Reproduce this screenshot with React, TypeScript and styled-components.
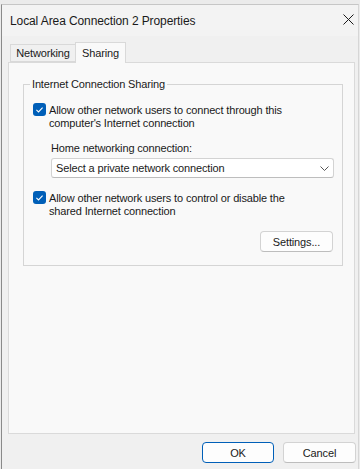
import React from "react";
import styled, { createGlobalStyle } from "styled-components";

const GlobalStyle = createGlobalStyle`
  html, body { margin: 0; padding: 0; background: #ebebeb; }
  body { font-family: "Liberation Sans", Arial, sans-serif; }
  * { box-sizing: border-box; }
`;

const Screen = styled.div`
  width: 360px;
  height: 469px;
  overflow: hidden;
  padding: 4px 1px 0 1px;
  background: #ebebeb;
  display: flex;
`;

const Window = styled.div`
  width: 358px;
  height: 480px;
  flex: none;
  display: flex;
  flex-direction: column;
  background: #f0f0f0;
  border-top: 1px solid #c6c6c6;
  border-left: 1px solid #8a8a8a;
  border-right: 1px solid #d6d6d6;
`;

const TitleBar = styled.div`
  height: 31px;
  flex: none;
  display: flex;
  align-items: center;
  justify-content: space-between;
  padding: 0 4px 0 8px;
  background: #f3f3f3;
`;

const Title = styled.span`
  font-size: 12px;
  color: #1a1a1a;
  letter-spacing: -0.1px;
`;

const CloseIcon = styled.svg`
  width: 11px;
  height: 11px;
  margin-top: -2px;
`;

const Body = styled.div`
  flex: 1;
  display: flex;
  flex-direction: column;
  padding: 6px 3px 0 6px;
`;

const TabStrip = styled.div`
  display: flex;
  align-items: flex-end;
  height: 21px;
  padding-left: 2px;
  margin-bottom: -1px;
  position: relative;
  z-index: 1;
`;

const Tab = styled.div<{ $active?: boolean; $width: number }>`
  width: ${(p) => p.$width}px;
  height: ${(p) => (p.$active ? 21 : 18)}px;
  margin-bottom: ${(p) => (p.$active ? 0 : 1)}px;
  margin-left: ${(p) => (p.$active ? -1 : 0)}px;
  display: flex;
  align-items: center;
  justify-content: center;
  font-size: 11px;
  letter-spacing: -0.15px;
  color: #1a1a1a;
  background: ${(p) => (p.$active ? "#f9f9f9" : "#f0f0f0")};
  border: 1px solid #d9d9d9;
  border-bottom: ${(p) => (p.$active ? "none" : "1px solid #d9d9d9")};
  padding-bottom: ${(p) => (p.$active ? 1 : 0)}px;
`;

const Panel = styled.div`
  height: 372px;
  flex: none;
  background: #f9f9f9;
  border: 1px solid #dadada;
  padding: 14px 11px 0 14px;
`;

const GroupBox = styled.fieldset`
  margin: 0;
  padding: 0;
  min-width: 0;
  border: 1px solid #d5d5d5;
`;

const GroupLegend = styled.legend`
  margin-left: 6px;
  padding: 0 2px;
  font-size: 11px;
  line-height: 14px;
  letter-spacing: -0.15px;
  color: #1a1a1a;
`;

const GroupContent = styled.div`
  display: flex;
  flex-direction: column;
  padding: 12px 9px 13px 9px;
`;

const CheckRow = styled.div<{ $gapTop?: number }>`
  display: flex;
  align-items: flex-start;
  gap: 3px;
  margin-top: ${(p) => p.$gapTop ?? 0}px;
`;

const CheckBox = styled.span`
  width: 13px;
  height: 13px;
  flex: none;
  border-radius: 3px;
  background: #005fb8;
  display: flex;
  align-items: center;
  justify-content: center;
`;

const CheckText = styled.span`
  padding-top: 1px;
  font-size: 11px;
  line-height: 13px;
  letter-spacing: -0.15px;
  color: #1a1a1a;
`;

const Indented = styled.div`
  margin-left: 18px;
  margin-top: 11px;
  display: flex;
  flex-direction: column;
`;

const FieldLabel = styled.span`
  font-size: 11px;
  line-height: 14px;
  letter-spacing: -0.15px;
  color: #1a1a1a;
`;

const Select = styled.div`
  margin-top: 3px;
  width: 283px;
  height: 20px;
  display: flex;
  align-items: center;
  justify-content: space-between;
  padding: 0 4px 0 4px;
  background: #ffffff;
  border: 1px solid #d3d3d3;
  border-bottom-color: #bdbdbd;
  border-radius: 3px;
  font-size: 11px;
  letter-spacing: -0.15px;
  color: #1a1a1a;
`;

const Chevron = styled.svg`
  width: 9px;
  height: 5px;
`;

const Button = styled.button<{ $primary?: boolean; $width: number }>`
  width: ${(p) => p.$width}px;
  height: 21px;
  padding: 0;
  background: #fdfdfd;
  border: 1px solid ${(p) => (p.$primary ? "#005fb8" : "#d3d3d3")};
  border-bottom-color: ${(p) => (p.$primary ? "#005fb8" : "#bdbdbd")};
  border-radius: 4px;
  font-family: "Liberation Sans", Arial, sans-serif;
  font-size: 11px;
  letter-spacing: -0.15px;
  color: #1a1a1a;
`;

const SettingsButton = styled(Button)`
  align-self: flex-end;
  margin-top: 13px;
`;

const Footer = styled.div`
  display: flex;
  justify-content: flex-end;
  gap: 9px;
  padding-top: 8px;
  margin-right: -1px;
`;

const Check = () => (
  <CheckBox>
    <svg width="13" height="13" viewBox="0 0 13 13">
      <path d="M3.4 6.9 L5.5 8.9 L9.6 4.6" fill="none" stroke="#ffffff" strokeWidth="1.1" />
    </svg>
  </CheckBox>
);

export default function App() {
  return (
    <>
      <GlobalStyle />
      <Screen>
        <Window>
          <TitleBar>
            <Title>Local Area Connection 2 Properties</Title>
            <CloseIcon viewBox="0 0 11 11">
              <path d="M0.5 0.5 L10.5 10.5 M10.5 0.5 L0.5 10.5" stroke="#1a1a1a" strokeWidth="1" fill="none" />
            </CloseIcon>
          </TitleBar>
          <Body>
            <TabStrip>
              <Tab $width={66}>Networking</Tab>
              <Tab $active $width={51}>Sharing</Tab>
            </TabStrip>
            <Panel>
              <GroupBox>
                <GroupLegend>Internet Connection Sharing</GroupLegend>
                <GroupContent>
                  <CheckRow>
                    <Check />
                    <CheckText>
                      Allow other network users to connect through this
                      <br />
                      computer's Internet connection
                    </CheckText>
                  </CheckRow>
                  <Indented>
                    <FieldLabel>Home networking connection:</FieldLabel>
                    <Select>
                      <span>Select a private network connection</span>
                      <Chevron viewBox="0 0 9 5">
                        <polyline points="0.5,0.5 4.5,4.5 8.5,0.5" fill="none" stroke="#555" strokeWidth="1" />
                      </Chevron>
                    </Select>
                  </Indented>
                  <CheckRow $gapTop={13}>
                    <Check />
                    <CheckText>
                      Allow other network users to control or disable the
                      <br />
                      shared Internet connection
                    </CheckText>
                  </CheckRow>
                  <SettingsButton $width={73}>Settings...</SettingsButton>
                </GroupContent>
              </GroupBox>
            </Panel>
            <Footer>
              <Button $primary $width={72}>OK</Button>
              <Button $width={73}>Cancel</Button>
            </Footer>
          </Body>
        </Window>
      </Screen>
    </>
  );
}
